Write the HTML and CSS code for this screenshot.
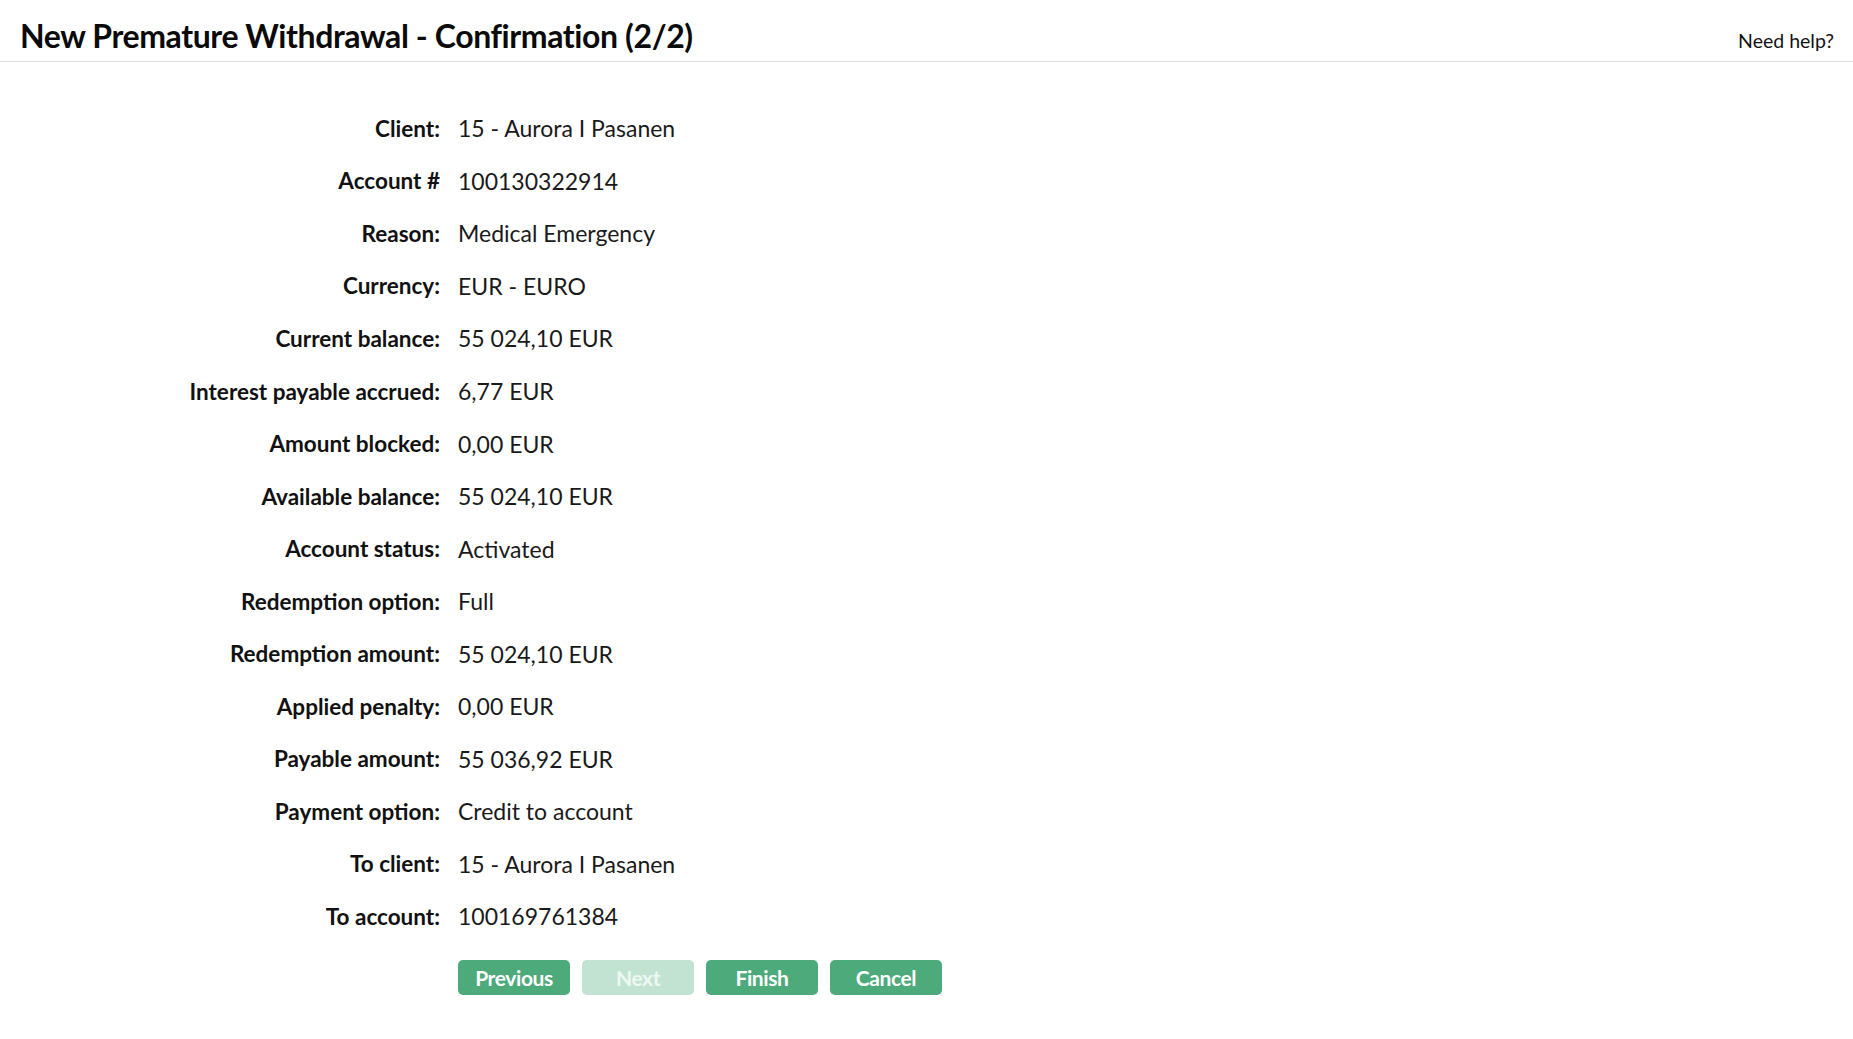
FILE: index.html
```html
<!DOCTYPE html>
<html lang="en">
<head>
<meta charset="utf-8">
<title>New Premature Withdrawal - Confirmation (2/2)</title>
<link rel="stylesheet" href="styles.css">
</head>
<body>
<header class="page-header">
  <h1 class="page-title">New Premature Withdrawal - Confirmation (2/2)</h1>
  <a class="help-link" href="#">Need help?</a>
</header>
<main class="content">
  <dl class="details">
    <dt>Client:</dt><dd>15 - Aurora I Pasanen</dd>
    <dt>Account #</dt><dd>100130322914</dd>
    <dt>Reason:</dt><dd>Medical Emergency</dd>
    <dt>Currency:</dt><dd>EUR - EURO</dd>
    <dt>Current balance:</dt><dd>55 024,10 EUR</dd>
    <dt>Interest payable accrued:</dt><dd>6,77 EUR</dd>
    <dt>Amount blocked:</dt><dd>0,00 EUR</dd>
    <dt>Available balance:</dt><dd>55 024,10 EUR</dd>
    <dt>Account status:</dt><dd>Activated</dd>
    <dt>Redemption option:</dt><dd>Full</dd>
    <dt>Redemption amount:</dt><dd>55 024,10 EUR</dd>
    <dt>Applied penalty:</dt><dd>0,00 EUR</dd>
    <dt>Payable amount:</dt><dd>55 036,92 EUR</dd>
    <dt>Payment option:</dt><dd>Credit to account</dd>
    <dt>To client:</dt><dd>15 - Aurora I Pasanen</dd>
    <dt>To account:</dt><dd>100169761384</dd>
  </dl>
  <div class="actions">
    <button class="btn" type="button">Previous</button>
    <button class="btn btn-disabled" type="button" disabled>Next</button>
    <button class="btn" type="button">Finish</button>
    <button class="btn" type="button">Cancel</button>
  </div>
</main>
</body>
</html>
```
FILE: styles.css
```css
html, body {
  margin: 0;
  padding: 0;
  background: #fff;
}
body {
  font-family: Lato, "Liberation Sans", sans-serif;
  color: #111;
}
.page-header {
  display: flex;
  justify-content: space-between;
  align-items: baseline;
  height: 62px;
  box-sizing: border-box;
  padding: 16px 19px 0 20px;
  border-bottom: 1px solid #dedede;
}
.page-title {
  margin: 0;
  font-size: 32px;
  font-weight: 700;
  letter-spacing: -0.4px;
  color: #0a0a0a;
}
.help-link {
  font-size: 19.5px;
  color: #111;
  text-decoration: none;
}
.content {
  padding-top: 40px;
}
.details {
  display: grid;
  grid-template-columns: 440px auto;
  grid-auto-rows: 52.55px;
  column-gap: 18px;
  margin: 0;
  align-items: center;
}
.details dt {
  text-align: right;
  font-size: 22.5px;
  font-weight: 700;
  color: #111;
}
.details dd {
  margin: 0;
  font-size: 23px;
  font-weight: 400;
  color: #1a1a1a;
}
.actions {
  display: flex;
  gap: 12px;
  margin: 17px 0 0 458px;
}
.btn {
  width: 112px;
  height: 35px;
  border: none;
  border-radius: 5px;
  background: #4caa7b;
  color: #fff;
  font-family: inherit;
  font-size: 21px;
  font-weight: 700;
  letter-spacing: -0.4px;
  padding: 0;
  cursor: pointer;
}
.btn-disabled {
  background: #c3e3d2;
  color: #eef8f2;
  cursor: default;
}
```
